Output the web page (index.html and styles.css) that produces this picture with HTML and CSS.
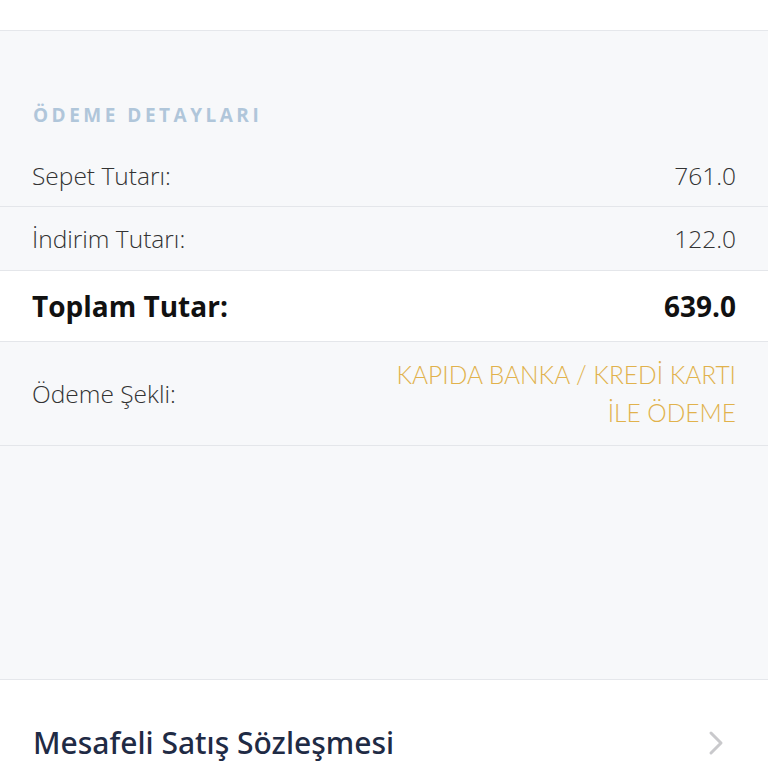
FILE: index.html
```html
<!DOCTYPE html>
<html lang="tr">
<head>
<meta charset="utf-8">
<link rel="stylesheet" href="styles.css">
</head>
<body>
<div class="top"></div>
<section class="details">
  <h2 class="title">ÖDEME DETAYLARI</h2>
  <div class="row">
    <span class="label">Sepet Tutarı:</span>
    <span class="value">761.0</span>
  </div>
  <div class="row">
    <span class="label">İndirim Tutarı:</span>
    <span class="value">122.0</span>
  </div>
  <div class="row total">
    <span class="label">Toplam Tutar:</span>
    <span class="value">639.0</span>
  </div>
  <div class="row pay">
    <span class="label">Ödeme Şekli:</span>
    <span class="method">KAPIDA BANKA / KREDİ KARTI<br>İLE ÖDEME</span>
  </div>
</section>
<div class="contract">
  <span class="contract-text">Mesafeli Satış Sözleşmesi</span>
  <svg class="chev" width="16" height="26" viewBox="0 0 16 26"><path d="M3 3 L13 13 L3 23" fill="none" stroke="#c9c9cc" stroke-width="3" stroke-linecap="round" stroke-linejoin="round"/></svg>
</div>
</body>
</html>
```
FILE: styles.css
```css
html, body {
  margin: 0;
  padding: 0;
}
body {
  width: 768px;
  height: 768px;
  overflow: hidden;
  background: #ffffff;
  font-family: "Open Sans", "Noto Sans", sans-serif;
  color: #333;
}
.top {
  height: 30px;
  background: #fff;
  border-bottom: 1px solid #e5e7eb;
}
.details {
  background: #f7f8fa;
  height: 649px;
  border-bottom: 1px solid #e5e7eb;
  box-sizing: border-box;
}
.title {
  margin: 0;
  padding: 72px 0 0 33px;
  height: 42px;
  line-height: 24px;
  font-size: 19px;
  font-weight: 700;
  letter-spacing: 3.5px;
  color: #b0c6da;
}
.row {
  display: flex;
  justify-content: space-between;
  align-items: center;
  padding: 0 32px 0 32px;
  height: 63px;
  border-bottom: 1px solid #e4e6ea;
  font-weight: 300;
  font-size: 24.5px;
  color: #333;
}
.row:first-of-type {
  height: 61px;
}
.total {
  background: #fff;
  height: 70px;
  font-weight: 700;
  font-size: 28px;
  color: #111;
}
.pay {
  height: 103px;
}
.method {
  text-align: right;
  font-family: "Lato", sans-serif;
  font-weight: 300;
  font-size: 24.5px;
  line-height: 38px;
  color: #e1b24c;
}
.contract {
  display: flex;
  justify-content: space-between;
  align-items: center;
  padding: 42px 44px 0 33px;
}
.contract-text {
  font-family: "Noto Sans", sans-serif;
  font-weight: 500;
  font-size: 30px;
  color: #1f2b45;
}
.chev {
  display: block;
}
```
